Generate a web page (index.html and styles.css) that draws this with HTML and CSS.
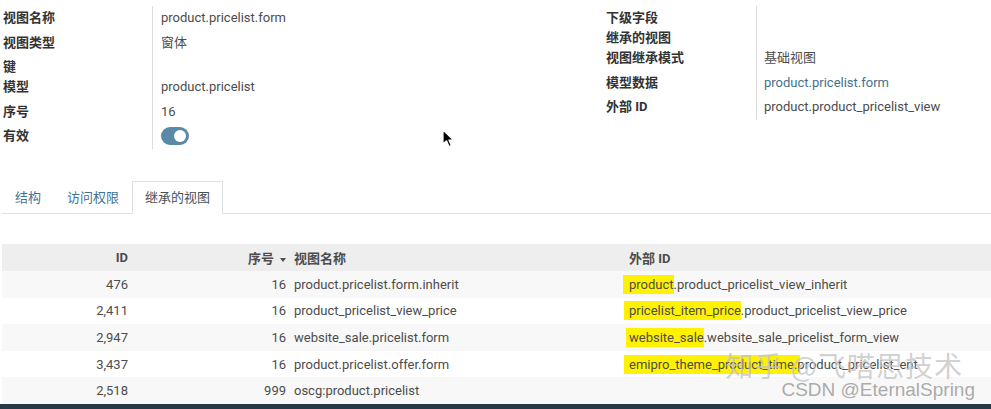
FILE: index.html
```html
<!DOCTYPE html>
<html lang="zh">
<head>
<meta charset="utf-8">
<title>product.pricelist.form</title>
<link rel="stylesheet" href="styles.css">
</head>
<body>
<div class="page">
  <div class="top">
    <div class="group group-left">
      <div class="lbl">视图名称</div><div class="val">product.pricelist.form</div>
      <div class="lbl">视图类型</div><div class="val">窗体</div>
      <div class="lbl short">键</div><div class="val short"></div>
      <div class="lbl">模型</div><div class="val">product.pricelist</div>
      <div class="lbl">序号</div><div class="val">16</div>
      <div class="lbl">有效</div><div class="val"><span class="toggle"><span class="knob"></span></span></div>
    </div>
    <div class="group group-right">
      <div class="lbl short">下级字段</div><div class="val short"></div>
      <div class="lbl short">继承的视图</div><div class="val short"></div>
      <div class="lbl">视图继承模式</div><div class="val">基础视图</div>
      <div class="lbl">模型数据</div><div class="val"><a class="link">product.pricelist.form</a></div>
      <div class="lbl">外部 ID</div><div class="val">product.product_pricelist_view</div>
    </div>
  </div>

  <ul class="tabs">
    <li class="tab">结构</li>
    <li class="tab">访问权限</li>
    <li class="tab active">继承的视图</li>
  </ul>

  <table class="list">
    <colgroup>
      <col class="c-id"><col class="c-seq"><col class="c-name"><col>
    </colgroup>
    <thead>
      <tr>
        <th class="num">ID</th>
        <th class="num">序号<span class="caret"></span></th>
        <th>视图名称</th>
        <th>外部 ID</th>
      </tr>
    </thead>
    <tbody>
      <tr><td class="num">476</td><td class="num">16</td><td>product.pricelist.form.inherit</td><td><mark class="m1">product</mark>.product_pricelist_view_inherit</td></tr>
      <tr><td class="num">2,411</td><td class="num">16</td><td>product_pricelist_view_price</td><td><mark class="m2">pricelist_item_price</mark>.product_pricelist_view_price</td></tr>
      <tr><td class="num">2,947</td><td class="num">16</td><td>website_sale.pricelist.form</td><td><mark class="m3">website_sale</mark>.website_sale_pricelist_form_view</td></tr>
      <tr><td class="num">3,437</td><td class="num">16</td><td>product.pricelist.offer.form</td><td><mark class="m2 m4">emipro_theme_product_time</mark>.product_pricelist_ent</td></tr>
      <tr><td class="num">2,518</td><td class="num">999</td><td>oscg:product.pricelist</td><td></td></tr>
    </tbody>
  </table>
  <div class="footer-bar"></div>

  <svg class="cursor" width="13" height="20" viewBox="0 0 13 20">
    <path d="M1 1 L1 15 L4.5 11.8 L7 17.5 L9.3 16.5 L6.9 11 L11.4 11 Z" fill="#000" stroke="#fff" stroke-width="1.2" stroke-linejoin="round"/>
  </svg>

  <div class="watermark">
    <div class="wm1">知乎 @飞嗒思技术</div>
    <div class="wm2">CSDN @EternalSpring</div>
  </div>
</div>
</body>
</html>
```

FILE: styles.css
```css
html, body {
  margin: 0;
  padding: 0;
  background: #fff;
}

body {
  font-family: "Roboto", "Noto Sans CJK SC", sans-serif;
  font-size: 13px;
  color: #4c4c4c;
}

.page {
  position: relative;
  width: 991px;
  height: 409px;
  overflow: hidden;
}

/* ---------- top form ---------- */
.top {
  display: flex;
  padding-top: 6px;
  padding-left: 3px;
}

.group {
  display: grid;
  grid-template-columns: 149px 1fr;
  align-content: start;
}

.group-left {
  width: 603px;
  grid-template-rows: 24.5px 24.5px 20px 24.5px 24.5px 24.5px;
}

.group-right {
  width: 385px;
  grid-template-columns: 150px 1fr;
  grid-template-rows: 20px 20px 24.5px 24.5px 24.5px;
}

.lbl {
  font-weight: 700;
  color: #333;
  line-height: 24px;
  white-space: nowrap;
}

.val {
  border-left: 1px solid #dcdcdc;
  padding-left: 8px;
  line-height: 24px;
  color: #4c4c4c;
  white-space: nowrap;
}

.group-right .val {
  padding-left: 7px;
}

.short {
  height: 20px;
}

.link {
  color: #43728e;
  text-decoration: none;
}

.toggle {
  display: inline-block;
  vertical-align: middle;
  position: relative;
  width: 28px;
  height: 18px;
  margin-top: -2px;
  border-radius: 9px;
  background: #5b8aa8;
}

.knob {
  position: absolute;
  top: 3px;
  right: 3px;
  width: 12px;
  height: 12px;
  border-radius: 50%;
  background: #fff;
}

/* ---------- tabs ---------- */
.tabs {
  display: flex;
  list-style: none;
  margin: 32.5px 0 0 2px;
  padding: 0;
  height: 32px;
  border-bottom: 1px solid #dee2e6;
}

.tab {
  padding: 0 12px;
  line-height: 31px;
  border: 1px solid transparent;
  border-bottom: none;
  color: #43728e;
  white-space: nowrap;
}

.tab.active {
  color: #495057;
  background: #fff;
  border-color: #dee2e6;
  height: 32px;
  margin-bottom: -1px;
}

/* ---------- list ---------- */
.list {
  margin: 30px 0 0 2px;
  width: 989px;
  border-collapse: collapse;
  table-layout: fixed;
}

.c-id { width: 130px; }
.c-seq { width: 158px; }
.c-name { width: 335px; }

.list th,
.list td {
  padding: 0 4px;
  text-align: left;
  white-space: nowrap;
  overflow: visible;
}

.list thead tr {
  height: 27px;
  background: #eeeeee;
}

.list th {
  font-weight: 700;
  color: #4c4c4c;
}

.list tbody tr {
  height: 26.6px;
}

.list tbody tr:nth-child(odd) {
  background: #f8f8f8;
}

.list td {
  color: #4c4c4c;
}

.list .num {
  text-align: right;
}

.caret {
  display: inline-block;
  width: 0;
  height: 0;
  margin-left: 6px;
  vertical-align: middle;
  border-left: 3.5px solid transparent;
  border-right: 3.5px solid transparent;
  border-top: 4px solid #4c4c4c;
}

mark {
  background: #fff200;
  color: inherit;
  padding: 2px 0 2px 6px;
  margin-left: -6px;
}

mark.m2 { padding-left: 5px; margin-left: -5px; }
mark.m3 { padding-left: 3px; margin-left: -3px; }
mark.m4 { padding-right: 6px; margin-right: -6px; }

.footer-bar {
  position: absolute;
  left: 0;
  right: 0;
  bottom: 0;
  height: 5px;
  background: #263746;
}

/* ---------- overlays ---------- */
.cursor {
  position: absolute;
  left: 442px;
  top: 129px;
}

.watermark {
  position: absolute;
  right: 16px;
  bottom: 10px;
  text-align: right;
  pointer-events: none;
}

.wm1 {
  font-family: "Noto Sans CJK SC", sans-serif;
  font-size: 28px;
  line-height: 30px;
  margin-right: 12px;
  margin-bottom: 1px;
  color: rgba(195, 195, 195, 0.75);
  letter-spacing: 1px;
}

.wm2 {
  font-family: "Liberation Sans", sans-serif;
  font-size: 19px;
  line-height: 18px;
  color: rgba(150, 150, 150, 0.8);
}
```
